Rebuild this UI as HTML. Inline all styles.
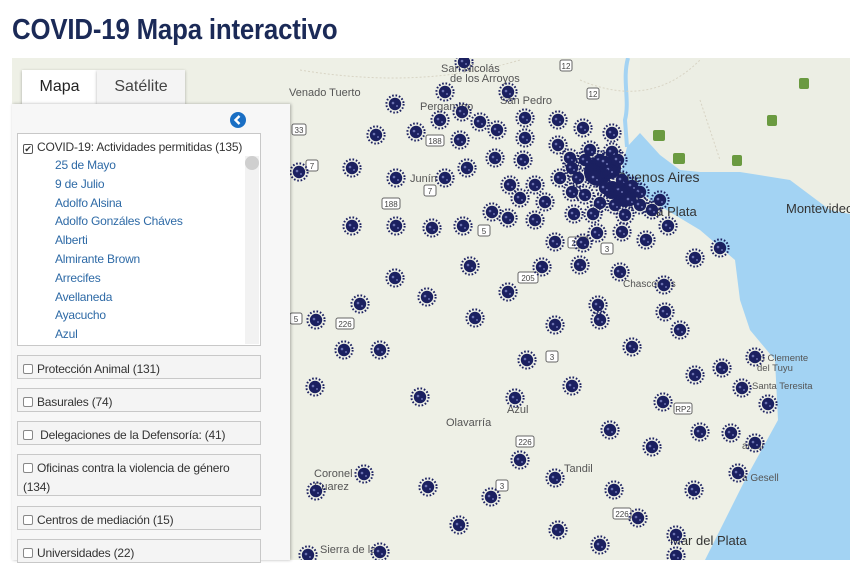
<!DOCTYPE html>
<html><head><meta charset="utf-8"><style>
*{margin:0;padding:0;box-sizing:border-box}
body{width:850px;height:560px;overflow:hidden;background:#fff;font-family:"Liberation Sans",sans-serif;position:relative}
h1{position:absolute;left:12px;top:14px;font-size:29px;font-weight:bold;color:#1b2a57;transform:scaleX(.89);transform-origin:left top;white-space:nowrap;letter-spacing:-.2px}
#map{position:absolute;left:12px;top:58px;width:838px;height:502px;overflow:hidden;background:#eeeee4}
#map svg{position:absolute;left:-12px;top:-58px}
.tab{position:absolute;top:70px;height:34px;font-size:16px;color:#222;line-height:34px;text-align:center;box-shadow:0 1px 3px rgba(0,0,0,.3)}
#panel{position:absolute;left:12px;top:104px;width:278px;height:456px;background:#f7f7f7;box-shadow:1px 0 3px rgba(0,0,0,.3)}
.box{position:absolute;left:17px;width:244px;border:1px solid #c8c8c8;background:#f4f4f4;font-size:12px;letter-spacing:-.2px;color:#333;padding:4px 4px 0 5px;line-height:19px}
.nw{white-space:nowrap}
.cb{display:inline-block;width:10px;height:10px;border:1px solid #888;border-radius:2px;background:#fff;margin-right:4px;vertical-align:-1px;font-size:9px;line-height:8px;text-align:center}
.list{position:absolute;left:55px;top:156px;font-size:12px;letter-spacing:-.2px;color:#2e6aa6;line-height:18.8px}
</style></head><body>
<h1>COVID-19 Mapa interactivo</h1>
<div id="map">
<svg width="850" height="560" viewBox="0 0 850 560" font-family="Liberation Sans, sans-serif">
<defs>
<g id="v"><circle r="6.2" fill="#1b2060"/><circle r="8.6" fill="none" stroke="#1b2060" stroke-width="2" stroke-dasharray="1.6 1.8"/><circle cx="-2" cy="-1" r="1.3" fill="#6a70b0"/><circle cx="2" cy="2" r="1" fill="#6a70b0"/></g>
</defs>
<rect x="0" y="0" width="850" height="560" fill="#eef0e6"/>
<path d="M640,58 L850,58 L850,215 L830,210 L810,195 L790,180 L740,172 L700,172 L680,170 L660,155 L640,133 Z" fill="#eceee4"/>
<path d="M627,147 L640,133 L660,155 L680,170 L700,172 L740,172 L790,180 L810,195 L830,210 L850,214 L850,560 L705,560 L715,540 L745,480 L778,420 L775,360 L750,330 L740,300 L735,260 L700,230 L650,200 L620,175 Z" fill="#a3d3f3"/>
<path d="M628,58 C622,80 630,100 625,120 L627,147" stroke="#a3d3f3" stroke-width="4" fill="none"/>
<path d="M300,70 Q420,90 520,60 M580,80 Q650,110 700,60 M700,100 L720,160" stroke="#d8d4c4" stroke-width="1" stroke-dasharray="2 2" fill="none"/>
<g font-size="11" fill="#555">
<text x="289" y="96">Venado Tuerto</text><text x="420" y="110">Pergamino</text><text x="500" y="104">San Pedro</text>
<text x="410" y="182">Junín</text><text x="446" y="426">Olavarría</text><text x="507" y="413">Azul</text>
<text x="564" y="472">Tandil</text><text x="314" y="477">Coronel</text><text x="314" y="490">Suarez</text>
<text x="320" y="553">Sierra de la</text><text x="441" y="72">San Nicolás</text><text x="450" y="82">de los Arroyos</text>
<text x="748" y="361" font-size="9.5">San Clemente</text><text x="757" y="371" font-size="9.5">del Tuyu</text>
<text x="752" y="389" font-size="9.5">Santa Teresita</text><text x="742" y="449" font-size="10">amar</text>
<text x="742" y="481" font-size="10">a Gesell</text><text x="623" y="287" font-size="10">Chascomús</text>
</g>
<text x="617" y="182" font-size="14" fill="#333">Buenos Aires</text>
<text x="649" y="216" font-size="13" fill="#333">La Plata</text>
<text x="786" y="213" font-size="13" fill="#333">Montevideo</text>
<text x="670" y="545" font-size="13" fill="#333">Mar del Plata</text>
<g font-size="8" fill="#444" text-anchor="middle">
<g stroke="#666" stroke-width="1" fill="#fff">
<rect x="292" y="124" width="14" height="11" rx="2"/><rect x="306" y="160" width="12" height="11" rx="2"/>
<rect x="426" y="135" width="18" height="11" rx="2"/><rect x="424" y="185" width="12" height="11" rx="2"/>
<rect x="382" y="198" width="18" height="11" rx="2"/><rect x="478" y="225" width="12" height="11" rx="2"/>
<rect x="518" y="272" width="20" height="11" rx="2"/><rect x="568" y="237" width="20" height="11" rx="2"/>
<rect x="601" y="243" width="12" height="11" rx="2"/><rect x="336" y="318" width="18" height="11" rx="2"/>
<rect x="290" y="313" width="12" height="11" rx="2"/><rect x="546" y="351" width="12" height="11" rx="2"/>
<rect x="516" y="436" width="18" height="11" rx="2"/><rect x="496" y="480" width="12" height="11" rx="2"/>
<rect x="613" y="508" width="18" height="11" rx="2"/><rect x="674" y="403" width="18" height="11" rx="2"/>
<rect x="560" y="60" width="12" height="11" rx="2"/><rect x="587" y="88" width="12" height="11" rx="2"/>
</g>
<text x="299" y="133">33</text><text x="312" y="169">7</text><text x="435" y="144">188</text><text x="430" y="194">7</text><text x="391" y="207">188</text><text x="484" y="234">5</text><text x="528" y="281">205</text><text x="578" y="246">205</text><text x="607" y="252">3</text><text x="345" y="327">226</text><text x="296" y="322">5</text><text x="552" y="360">3</text><text x="525" y="445">226</text><text x="502" y="489">3</text><text x="622" y="517">226</text><text x="683" y="412">RP2</text><text x="566" y="69">12</text><text x="593" y="97">12</text>
</g>
<g fill="#6a9a40"><rect x="653" y="130" width="12" height="11" rx="2"/><rect x="673" y="153" width="12" height="11" rx="2"/><rect x="732" y="155" width="10" height="11" rx="2"/><rect x="767" y="115" width="10" height="11" rx="2"/><rect x="799" y="78" width="10" height="11" rx="2"/></g>
<g fill="#1b2060">
<circle cx="598" cy="172" r="14"/><circle cx="610" cy="168" r="11"/><circle cx="625" cy="195" r="12"/><circle cx="612" cy="190" r="9"/>
</g>
<g>
<use href="#v" x="464" y="62"/><use href="#v" x="395" y="104"/><use href="#v" x="445" y="92"/><use href="#v" x="376" y="135"/><use href="#v" x="416" y="132"/><use href="#v" x="440" y="120"/><use href="#v" x="462" y="112"/><use href="#v" x="480" y="122"/><use href="#v" x="497" y="130"/><use href="#v" x="525" y="118"/><use href="#v" x="508" y="92"/><use href="#v" x="558" y="120"/><use href="#v" x="583" y="128"/><use href="#v" x="612" y="133"/><use href="#v" x="460" y="140"/><use href="#v" x="525" y="138"/><use href="#v" x="558" y="145"/><use href="#v" x="495" y="158"/><use href="#v" x="523" y="160"/><use href="#v" x="570" y="158"/><use href="#v" x="352" y="168"/><use href="#v" x="299" y="172"/><use href="#v" x="396" y="178"/><use href="#v" x="445" y="178"/><use href="#v" x="467" y="168"/><use href="#v" x="510" y="185"/><use href="#v" x="535" y="185"/><use href="#v" x="560" y="178"/><use href="#v" x="492" y="212"/><use href="#v" x="520" y="198"/><use href="#v" x="545" y="202"/><use href="#v" x="572" y="192"/><use href="#v" x="352" y="226"/><use href="#v" x="396" y="226"/><use href="#v" x="432" y="228"/><use href="#v" x="463" y="226"/><use href="#v" x="508" y="218"/><use href="#v" x="535" y="220"/><use href="#v" x="574" y="214"/><use href="#v" x="597" y="233"/><use href="#v" x="622" y="232"/><use href="#v" x="646" y="240"/><use href="#v" x="668" y="226"/><use href="#v" x="720" y="248"/><use href="#v" x="470" y="266"/><use href="#v" x="542" y="267"/><use href="#v" x="580" y="265"/><use href="#v" x="620" y="272"/><use href="#v" x="555" y="242"/><use href="#v" x="583" y="243"/><use href="#v" x="695" y="258"/><use href="#v" x="395" y="278"/><use href="#v" x="360" y="304"/><use href="#v" x="427" y="297"/><use href="#v" x="508" y="292"/><use href="#v" x="598" y="305"/><use href="#v" x="664" y="285"/><use href="#v" x="665" y="312"/><use href="#v" x="316" y="320"/><use href="#v" x="475" y="318"/><use href="#v" x="555" y="325"/><use href="#v" x="600" y="320"/><use href="#v" x="680" y="330"/><use href="#v" x="344" y="350"/><use href="#v" x="380" y="350"/><use href="#v" x="632" y="347"/><use href="#v" x="527" y="360"/><use href="#v" x="755" y="357"/><use href="#v" x="722" y="368"/><use href="#v" x="695" y="375"/><use href="#v" x="572" y="386"/><use href="#v" x="315" y="387"/><use href="#v" x="420" y="397"/><use href="#v" x="515" y="398"/><use href="#v" x="663" y="402"/><use href="#v" x="742" y="388"/><use href="#v" x="768" y="404"/><use href="#v" x="610" y="430"/><use href="#v" x="700" y="432"/><use href="#v" x="731" y="433"/><use href="#v" x="652" y="447"/><use href="#v" x="755" y="443"/><use href="#v" x="364" y="474"/><use href="#v" x="555" y="478"/><use href="#v" x="738" y="473"/><use href="#v" x="428" y="487"/><use href="#v" x="491" y="497"/><use href="#v" x="520" y="460"/><use href="#v" x="614" y="490"/><use href="#v" x="694" y="490"/><use href="#v" x="316" y="491"/><use href="#v" x="638" y="518"/><use href="#v" x="459" y="525"/><use href="#v" x="558" y="530"/><use href="#v" x="676" y="535"/><use href="#v" x="600" y="545"/><use href="#v" x="380" y="552"/><use href="#v" x="308" y="555"/><use href="#v" x="676" y="556"/>
<use href="#v" x="590" y="150"/><use href="#v" x="600" y="160"/><use href="#v" x="610" y="170"/><use href="#v" x="595" y="178"/><use href="#v" x="605" y="188"/><use href="#v" x="620" y="190"/><use href="#v" x="630" y="200"/><use href="#v" x="615" y="205"/><use href="#v" x="640" y="205"/><use href="#v" x="652" y="210"/><use href="#v" x="585" y="195"/><use href="#v" x="578" y="178"/><use href="#v" x="600" y="203"/><use href="#v" x="625" y="215"/><use href="#v" x="660" y="200"/><use href="#v" x="572" y="168"/><use href="#v" x="585" y="160"/><use href="#v" x="612" y="152"/><use href="#v" x="605" y="162"/><use href="#v" x="640" y="192"/><use href="#v" x="593" y="214"/><use href="#v" x="622" y="180"/><use href="#v" x="632" y="186"/><use href="#v" x="618" y="160"/>
</g>
</svg>
</div>
<div class="tab" style="left:22px;width:75px;background:#fff;font-weight:500">Mapa</div>
<div class="tab" style="left:97px;width:88px;background:#f4f4f4;color:#444">Satélite</div>
<div id="panel"></div>
<svg style="position:absolute;left:230px;top:112px" width="16" height="16"><circle cx="8" cy="8" r="8" fill="#1a6fc4"/><path d="M9.5,4 L5.5,8 L9.5,12" stroke="#fff" stroke-width="2.4" fill="none"/></svg>
<div class="box nw" style="top:133px;height:213px;background:#fff">
<span class="cb" style="border-color:#555">✔</span>COVID-19: Actividades permitidas (135)
<div style="position:absolute;right:1px;top:22px;width:14px;height:188px;background:#f2f2f2"></div>
<div style="position:absolute;right:1px;top:22px;width:14px;height:14px;border-radius:7px;background:#cfcfcf"></div>
</div>
<div class="list">25 de Mayo<br>9 de Julio<br>Adolfo Alsina<br>Adolfo Gonzáles Cháves<br>Alberti<br>Almirante Brown<br>Arrecifes<br>Avellaneda<br>Ayacucho<br>Azul</div>
<div class="box nw" style="top:355px;height:24px"><span class="cb"></span>Protección Animal (131)</div>
<div class="box nw" style="top:388px;height:24px"><span class="cb"></span>Basurales (74)</div>
<div class="box nw" style="top:421px;height:24px"><span class="cb"></span> Delegaciones de la Defensoría: (41)</div>
<div class="box nw" style="top:454px;height:42px"><span class="cb"></span>Oficinas contra la violencia de género<br>(134)</div>
<div class="box nw" style="top:506px;height:24px"><span class="cb"></span>Centros de mediación (15)</div>
<div class="box nw" style="top:539px;height:24px"><span class="cb"></span>Universidades (22)</div>
</body></html>
